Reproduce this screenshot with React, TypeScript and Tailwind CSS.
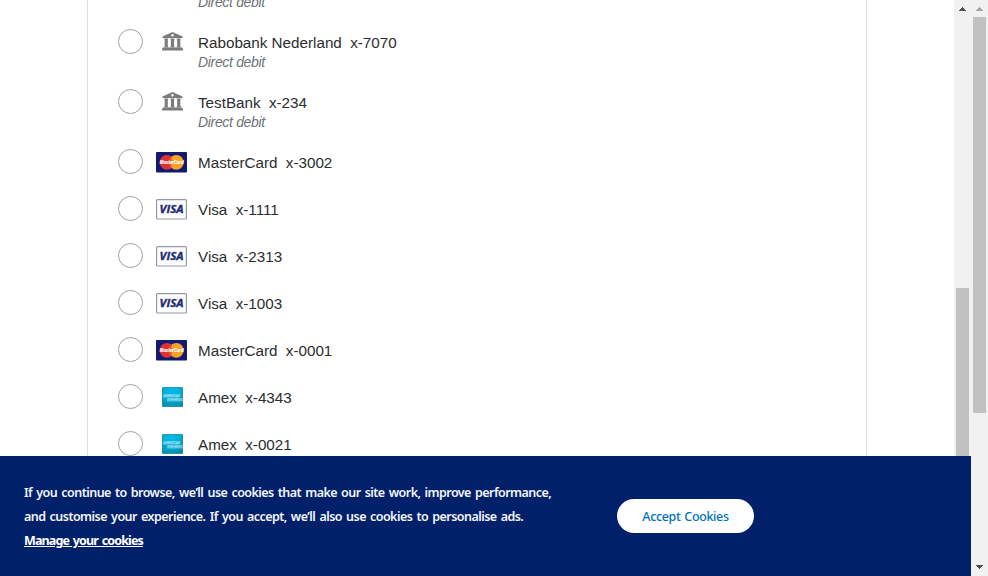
type Kind = 'bank' | 'mastercard' | 'visa' | 'amex';

interface Source {
  name: string;
  digits: string;
  kind: Kind;
  debit?: boolean;
}

const sources: Source[] = [
  { name: 'Rabobank Nederland', digits: 'x-7070', kind: 'bank', debit: true },
  { name: 'TestBank', digits: 'x-234', kind: 'bank', debit: true },
  { name: 'MasterCard', digits: 'x-3002', kind: 'mastercard' },
  { name: 'Visa', digits: 'x-1111', kind: 'visa' },
  { name: 'Visa', digits: 'x-2313', kind: 'visa' },
  { name: 'Visa', digits: 'x-1003', kind: 'visa' },
  { name: 'MasterCard', digits: 'x-0001', kind: 'mastercard' },
  { name: 'Amex', digits: 'x-4343', kind: 'amex' },
  { name: 'Amex', digits: 'x-0021', kind: 'amex' },
];

function BankIcon() {
  return (
    <svg width="21" height="20" viewBox="0 0.4 21 20" className="ml-px" fill="#7b7b7b">
      <path fillRule="evenodd" d="M10.5 0.5 20.5 4.8V6.4H0.5V4.8ZM10.5 2.4a1.3 1.3 0 1 0 0 2.6a1.3 1.3 0 0 0 0-2.6Z" />
      <path d="M2.2 7H6.3V8H5.8V15H6.3V16H2.2V15H2.7V8H2.2ZM8.4 7H12.6V8H12.1V15H12.6V16H8.4V15H8.9V8H8.4ZM14.7 7H18.8V8H18.3V15H18.8V16H14.7V15H15.2V8H14.7Z" />
      <path d="M1 15.8H20V17H21V19H0V17H1Z" />
    </svg>
  );
}

function MasterCardIcon() {
  return (
    <svg width="31" height="21" viewBox="0 0 31 21">
      <rect width="31" height="20.6" rx="1" fill="#101b70" />
      <circle cx="11" cy="10.3" r="7.4" fill="#dc3137" />
      <circle cx="20.3" cy="10.3" r="7.4" fill="#f9a12a" />
      <path d="M15.65 4.5a7.4 7.4 0 0 0 0 11.6" fill="#e5532e" />
      <text x="3.8" y="12.3" textLength="23.8" lengthAdjust="spacingAndGlyphs" fontSize="5.7" fontWeight="700" fontStyle="italic" fontFamily="Liberation Sans, sans-serif" fill="#fff" stroke="#fff" strokeWidth="0.15">MasterCard</text>
    </svg>
  );
}

function VisaIcon() {
  return (
    <svg width="31" height="21" viewBox="0 0 31 21">
      <rect x="0.6" y="0.6" width="29.8" height="19.4" rx="1" fill="#fff" stroke="#9299ab" strokeWidth="1.2" />
      <text x="3.6" y="14" textLength="24" lengthAdjust="spacingAndGlyphs" fontSize="11" fontWeight="700" fontStyle="italic" fontFamily="Open Sans, sans-serif" fill="#1d2d74" stroke="#1d2d74" strokeWidth="0.35">VISA</text>
    </svg>
  );
}

function AmexIcon() {
  return (
    <svg width="21" height="20" viewBox="0 0 21 20" className="ml-px">
      <defs>
        <radialGradient id="amex" cx="45%" cy="15%" r="100%">
          <stop offset="0" stopColor="#00bdea" />
          <stop offset="0.55" stopColor="#00a8d2" />
          <stop offset="1" stopColor="#00839f" />
        </radialGradient>
      </defs>
      <rect x="0.4" y="0.4" width="20.2" height="19.2" rx="0.5" fill="url(#amex)" stroke="#087f96" strokeWidth="0.8" />
      <path d="M1 7H18V10.7H1ZM5 11H20.5V14.7H5Z" fill="#7ed3e8" opacity="0.4" />
      <g fontFamily="Liberation Sans, sans-serif" fontWeight="400" fill="none" stroke="#c9f0f8" strokeWidth="0.2">
        <text x="1.3" y="10.2" fontSize="4" textLength="16.5" lengthAdjust="spacingAndGlyphs">AMERICAN</text>
        <text x="5.3" y="14.3" fontSize="4" textLength="15" lengthAdjust="spacingAndGlyphs">EXPRESS</text>
      </g>
    </svg>
  );
}

function SourceIcon({ kind }: { kind: Kind }) {
  if (kind === 'bank') return <BankIcon />;
  if (kind === 'mastercard') return <MasterCardIcon />;
  if (kind === 'visa') return <VisaIcon />;
  return <AmexIcon />;
}

function Row({ source }: { source: Source }) {
  return (
    <li className={source.debit ? 'flex h-[60px] shrink-0 items-start' : 'flex h-[47px] shrink-0 items-start'}>
      <span className="mt-[17px] size-[25px] shrink-0 rounded-full border border-[#9da3a6] bg-white" />
      <span className="ml-[13px] mt-[20px] flex w-[31px] shrink-0 justify-center">
        <SourceIcon kind={source.kind} />
      </span>
      <div className="ml-[11px] mt-[21px] flex flex-col">
        <div className="flex h-5 gap-[8.3px] whitespace-nowrap text-[15.22px] leading-5 text-[#2c2e2f]">
          <span>{source.name}</span>
          <span>{source.digits}</span>
        </div>
        {source.debit && <span className="-mt-px h-5 text-[14px] italic leading-5 tracking-[-0.33px] text-[#6c7378]">Direct debit</span>}
      </div>
    </li>
  );
}

function Arrow({ down, color }: { down?: boolean; color: string }) {
  return (
    <svg width="7" height="4" viewBox="0 0 7 4" shapeRendering="crispEdges" fill={color}>
      {down ? <path d="M0 0H7V1H6V2H5V3H4V4H3V3H2V2H1V1H0Z" /> : <path d="M3 0H4V1H5V2H6V3H7V4H0V3H1V2H2V1H3Z" />}
    </svg>
  );
}

export default function App() {
  return (
    <div className="flex h-[576px] w-[988px] overflow-hidden bg-white font-['Liberation_Sans',Arial,sans-serif]">
      <div className="flex w-[971px] flex-col">
        <main className="flex h-[456px] overflow-hidden">
          <div className="flex w-[954px] pl-[87px]">
            <ul className="flex h-[456px] w-[780px] flex-col overflow-hidden border-x border-[#dedfe0] pl-[30px]">
              <li className="h-3 shrink-0 pl-[80px] text-[14px] italic tracking-[-0.33px] text-[#6c7378]">
                <span className="-mt-[8px] block h-5 leading-5">Direct debit</span>
              </li>
              {sources.map((s) => (
                <Row key={s.name + s.digits} source={s} />
              ))}
            </ul>
          </div>
          <div className="flex w-[17px] flex-col items-center bg-[#f1f1f1]">
            <div className="flex h-[288px] pt-[7px]">
              <Arrow color="#505050" />
            </div>
            <div className="h-[168px] w-[13px] bg-[#c1c1c1]" />
          </div>
        </main>
        <footer className="flex h-[120px] items-center bg-[#002169] pl-6 font-['Noto_Sans',sans-serif]">
          <div className="flex w-[593px] flex-col whitespace-nowrap pt-[2px] text-[12.5px] font-semibold leading-6 text-[#f3f5fa]">
            <p className="tracking-[-0.54px] [word-spacing:1.4px]">If you continue to browse, we’ll use cookies that make our site work, improve performance,</p>
            <p className="tracking-[-0.54px] [word-spacing:1.4px]">and customise your experience. If you accept, we’ll also use cookies to personalise ads.</p>
            <a className="self-start font-bold tracking-[-0.87px] text-white underline [word-spacing:1.4px]">Manage your cookies</a>
          </div>
          <button className="h-[34px] w-[137px] rounded-full bg-white pt-[2px] text-[12.5px] font-medium tracking-[-0.35px] text-[#0070ba] [word-spacing:1px]">Accept Cookies</button>
        </footer>
      </div>
      <div className="flex w-[17px] flex-col items-center bg-[#f1f1f1]">
        <div className="flex h-[17px] pt-[7px]">
          <Arrow color="#a3a3a3" />
        </div>
        <div className="h-[396px] w-[13px] bg-[#c1c1c1]" />
        <div className="mt-auto flex h-[11px]">
          <Arrow down color="#505050" />
        </div>
      </div>
    </div>
  );
}
